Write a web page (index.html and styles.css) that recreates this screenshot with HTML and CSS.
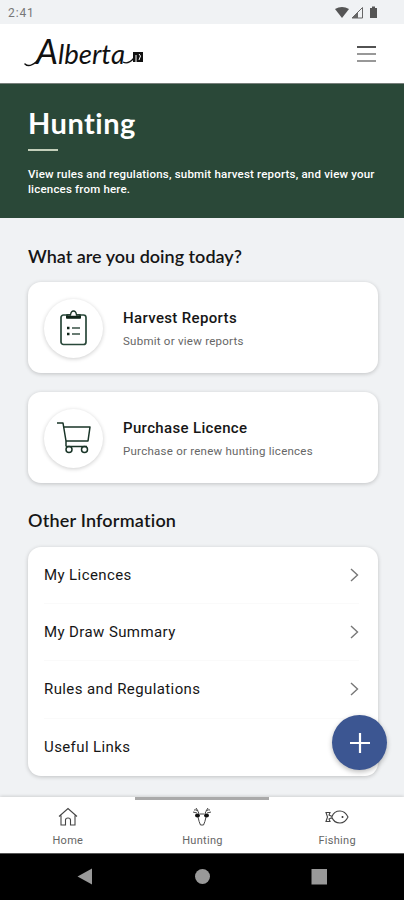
FILE: index.html
```html
<!DOCTYPE html>
<html lang="en">
<head>
<meta charset="utf-8">
<meta name="viewport" content="width=device-width">
<title>Hunting</title>
<link rel="stylesheet" href="styles.css">
</head>
<body>
<div class="status">
  <span>2:41</span>
  <svg width="44" height="14" viewBox="0 0 44 14"><path d="M0 3Q7-1 14 3L7 12Z" fill="#555"/><path d="M17 12 27.500 1.500V12Z" fill="none" stroke="#666"/><path d="M17 12 23 6v6Z" fill="#666"/><path d="M35 2h2V.5h3V2h2v10h-7Z" fill="#555"/></svg>
</div>
<header class="appbar">
  <svg class="logo" width="124" height="58" viewBox="0 -7 124 58">
    <path d="M1 32Q5 36 12 30L17 25" fill="none" stroke="#111" stroke-width="1.500" stroke-linecap="round"/>
    <text class="wordmark" x="12" y="32" textLength="89" lengthAdjust="spacingAndGlyphs"><tspan class="initial">A</tspan>lberta</text>
    <path d="M99 30Q104 33 110 26" fill="none" stroke="#111" stroke-width="1.300"/>
    <path d="M109 20h10v10h-10Z" fill="#111"/><path d="M112 23v7M115 22l1.500 2-1.500 4" fill="none" stroke="#fff"/>
  </svg>
  <svg width="20" height="18" viewBox="0 0 20 18"><path d="M0 2h19" stroke="#333" stroke-width="1.700"/><path d="M0 9h19M0 16h19" stroke="#777" stroke-width="1.700"/></svg>
</header>
<section class="hero">
  <h1>Hunting</h1>
  <div class="rule"></div>
  <p>View rules and regulations, submit harvest reports, and view your<br>licences from here.</p>
</section>
<main>
  <h2>What are you doing today?</h2>
  <div class="card">
    <div class="disc"><svg width="28" height="36" viewBox="0 0 28 36"><rect x="1" y="5" width="25" height="29.500" rx="2.500" fill="none" stroke="#29483a" stroke-width="1.700"/><path d="M7 8V5h3.500Q11 1 13.500 1T16.500 5H20v3Z" fill="#fff" stroke="#183326" stroke-width="1.300"/><path d="M6 7h15" stroke="#102519" stroke-width="2.500"/><path d="M7 18h2.500M7 24h2.500" stroke="#102519" stroke-width="2.500"/><path d="M12 18h8M12 24h8" stroke="#385246" stroke-width="1.700"/></svg></div>
    <div><h3>Harvest Reports</h3><p class="sub">Submit or view reports</p></div>
  </div>
  <div class="card">
    <div class="disc"><svg width="36" height="34" viewBox="0 0 36 34"><g fill="none" stroke="#193427" stroke-width="1.500" stroke-linejoin="round"><path d="M1 2h6l3 18v5.500M8 6h26l-2 14H10M10 25.500h21"/><circle cx="13" cy="28.500" r="3"/><circle cx="28.500" cy="28.500" r="3"/></g></svg></div>
    <div><h3>Purchase Licence</h3><p class="sub">Purchase or renew hunting licences</p></div>
  </div>
  <h2 class="second">Other Information</h2>
  <div class="list">
    <div class="row"><span>My Licences</span><svg width="9" height="14" viewBox="0 0 9 14"><path d="m1 1 6.500 6L1 13"/></svg></div>
    <div class="row"><span>My Draw Summary</span><svg width="9" height="14" viewBox="0 0 9 14"><path d="m1 1 6.500 6L1 13"/></svg></div>
    <div class="row"><span>Rules and Regulations</span><svg width="9" height="14" viewBox="0 0 9 14"><path d="m1 1 6.500 6L1 13"/></svg></div>
    <div class="row"><span>Useful Links</span></div>
  </div>
</main>
<div class="fab"><svg width="22" height="22" viewBox="0 0 22 22"><path d="M11 1v20M1 11h20" stroke="#fff" stroke-width="2.200"/></svg></div>
<nav class="tabs">
  <div class="tab"><svg width="20" height="20" viewBox="0 0 20 20"><path d="M1 9.500 10 1.500l9 8M3 8.500V18h4.500v-5q0-2 2.500-2t2.500 2v5H17V8.500" fill="none" stroke="#444" stroke-width="1.100"/></svg><span>Home</span></div>
  <div class="tab active"><svg width="20" height="20" viewBox="0 0 20 20"><path d="M2 3q4-1 5 4M4 1l2 3M1 5l4 1M18 3q-4-1-5 4M16 1l-2 3M19 5l-4 1M8 7h4" fill="none" stroke="#444"/><ellipse cx="5.500" cy="8.500" rx="2.500" ry="1.900" fill="#111"/><ellipse cx="14.500" cy="8.500" rx="2.500" ry="1.900" fill="#111"/><path d="M6 10q1 5 2.500 8h3Q13 15 14 10" fill="none" stroke="#444"/></svg><span>Hunting</span></div>
  <div class="tab"><svg width="24" height="20" viewBox="0 0 24 20"><path d="M1 5.500h4L4 8l3 1.500Q9 4 15 4q5 0 8 6-3 6-8 6-6 0-8-5.500L4 12l1 2.500H1L2.500 10Z" fill="none" stroke="#444" stroke-width="1.100"/><circle cx="17.500" cy="10" r="1" fill="#333"/></svg><span>Fishing</span></div>
</nav>
<footer class="system">
  <svg width="404" height="46" viewBox="0 0 404 46"><g fill="#999"><path d="M77.500 22.500 92 14.500v16Z"/><circle cx="202.500" cy="22.500" r="7.500"/><path d="M311.500 15H327v15.500h-15.500Z"/></g></svg>
</footer>
</body>
</html>
```
FILE: styles.css
```css
* { box-sizing: border-box; margin: 0; padding: 0; }
body { width: 404px; height: 900px; overflow: hidden; display: flex; flex-direction: column; position: relative; background: #f0f2f4; font-family: Roboto, "Liberation Sans", sans-serif; color: #161616; }
svg { display: block; flex: none; }
span { white-space: nowrap; }
.status { height: 24px; flex: none; display: flex; justify-content: space-between; align-items: center; padding: 2px 25px 0 8px; font-size: 12px; letter-spacing: .9px; color: #777; }
.appbar { height: 60px; flex: none; display: flex; justify-content: space-between; align-items: center; padding: 0 27px 0 24px; background: #fff; border-bottom: 1px solid #777f7b; }
.wordmark { font: italic 27px Lato, sans-serif; fill: #111; }
.initial { font-size: 34px; }
.hero { height: 134px; flex: none; padding: 20px 28px 0; background: #2a4838; color: #fff; }
h1 { font: 700 29px/38px Lato, sans-serif; letter-spacing: .5px; }
.rule { width: 30px; height: 2px; margin-top: 7px; background: #c3cfba; }
.hero p { margin-top: 16px; font-size: 11.500px; font-weight: 500; line-height: 14.500px; letter-spacing: .19px; white-space: nowrap; }
main { flex: 1; padding: 27px 26px 0 28px; }
h2 { font: 600 18px/22px Lato, sans-serif; letter-spacing: 0; }
.card { height: 91px; margin-top: 15px; display: flex; align-items: center; gap: 20px; padding: 1px 0 0 16px; background: #fff; border-radius: 13px; box-shadow: 0 1px 4px #0003; }
.card + .card { margin-top: 19px; }
.disc { width: 59px; height: 59px; display: flex; align-items: center; justify-content: center; border-radius: 50%; box-shadow: 0 1px 4px #0003; }
h3 { margin-top: 2px; font-size: 15px; line-height: 20px; font-weight: 500; letter-spacing: .35px; }
.sub { margin-top: 4px; font-size: 11.500px; line-height: 18px; color: #666; letter-spacing: .25px; }
.second { margin-top: 26px; letter-spacing: .2px; }
.list { height: 229px; margin-top: 16px; padding: 0 19px 0 16px; background: #fff; border-radius: 13px; box-shadow: 0 1px 4px #0003; }
.row { height: 57.200px; display: flex; align-items: center; justify-content: space-between; font-size: 15px; letter-spacing: .4px; border-bottom: 1px solid #fafafa; }
.row:last-child { border: 0; }
.row path { fill: none; stroke: #777; stroke-width: 1.400; }
.fab { position: absolute; left: 332px; top: 715px; width: 55px; height: 55px; display: flex; align-items: center; justify-content: center; border-radius: 50%; background: #3c5692; box-shadow: 0 2px 5px #0004; }
.tabs { height: 56px; flex: none; display: grid; grid-template-columns: repeat(3, 1fr); background: #fff; box-shadow: 0 -1px 3px #0002; }
.tab { display: flex; flex-direction: column; align-items: center; gap: 7px; padding: 7px 0 0 1px; border-top: 3px solid transparent; font-size: 11px; line-height: 14px; letter-spacing: .3px; color: #666; }
.active { border-color: #aaa; }
.system { height: 47px; flex: none; background: #000; border-top: 1px solid #555; }
```
